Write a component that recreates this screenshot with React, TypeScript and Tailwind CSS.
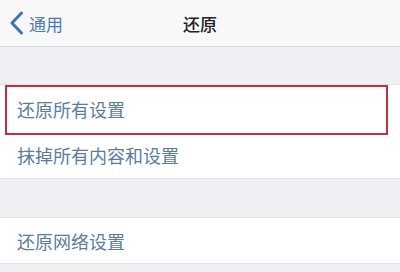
import React from 'react';

const rowText = 'text-[18px] leading-none text-[#5a7d9e]';

export default function App() {
  return (
    <div className="w-[400px] h-[272px] bg-[#efeff4] overflow-hidden" style={{ fontFamily: '"Noto Sans CJK SC", "Noto Sans", sans-serif' }}>
      {/* Nav bar */}
      <div className="relative h-[47px] bg-[#f8f8f8] border-b border-[#d6d6d8] flex items-center">
        <div className="flex items-center pl-[9px] gap-[5px]">
          <svg width="15" height="24" viewBox="0 0 15 24" fill="none">
            <path d="M12.5 2 L3 12 L12.5 22" stroke="#3b72b8" strokeWidth="3" strokeLinecap="round" strokeLinejoin="round" />
          </svg>
          <span className="text-[17px] text-[#4a7ab5] leading-none">通用</span>
        </div>
        <span className="absolute left-1/2 -translate-x-1/2 text-[17px] font-medium text-[#222] leading-none">还原</span>
      </div>

      <div className="h-[37px]" />

      {/* Group 1 */}
      <div className="bg-white border-y border-[#e2e2e6]">
        <div className="relative h-[47px] flex items-center pl-[17px]">
          <span className={rowText}>还原所有设置</span>
          <div className="absolute left-[5px] right-[12px] top-0 bottom-[-3px] border-2 border-[#c1303f] pointer-events-none" />
        </div>
        <div className="h-[46px] flex items-center pl-[17px]">
          <span className={rowText}>抹掉所有内容和设置</span>
        </div>
      </div>

      <div className="h-[38px]" />

      {/* Group 2 */}
      <div className="bg-white border-y border-[#e2e2e6] h-[47px] flex items-center pl-[17px]">
        <span className={rowText}>还原网络设置</span>
      </div>
    </div>
  );
}
